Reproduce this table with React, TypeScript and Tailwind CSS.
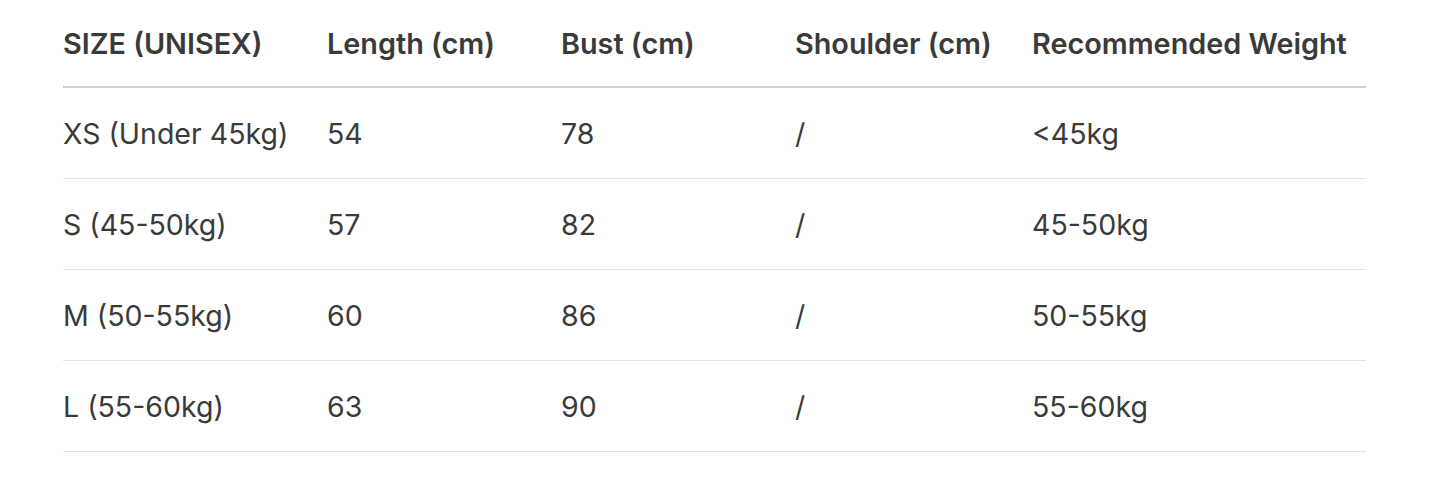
import React from "react";

const headers = ["SIZE (UNISEX)", "Length (cm)", "Bust (cm)", "Shoulder (cm)", "Recommended Weight"];
const rows = [
  ["XS (Under 45kg)", "54", "78", "/", "<45kg"],
  ["S (45-50kg)", "57", "82", "/", "45-50kg"],
  ["M (50-55kg)", "60", "86", "/", "50-55kg"],
  ["L (55-60kg)", "63", "90", "/", "55-60kg"],
];

export default function App() {
  return (
    <div className="w-[1445px] h-[477px] bg-white text-[#3a3a3a]" style={{ fontFamily: "Inter, 'Liberation Sans', sans-serif" }}>
      <div className="ml-[63px] w-[1303px]">
        <div className="grid grid-cols-[264px_234px_234px_237px_1fr] h-[88px] items-center pt-[2px] border-b-2 border-[#cfcfcf] text-[28.8px] font-semibold">
          {headers.map((h) => (
            <div key={h} className="whitespace-nowrap">{h}</div>
          ))}
        </div>
        {rows.map((r, i) => (
          <div key={i} className="grid grid-cols-[264px_234px_234px_237px_1fr] h-[91px] items-center pt-[2px] border-b border-[#e3e3e3] text-[28.5px]">
            {r.map((c, j) => (
              <div key={j} className="whitespace-nowrap">{c}</div>
            ))}
          </div>
        ))}
      </div>
    </div>
  );
}
